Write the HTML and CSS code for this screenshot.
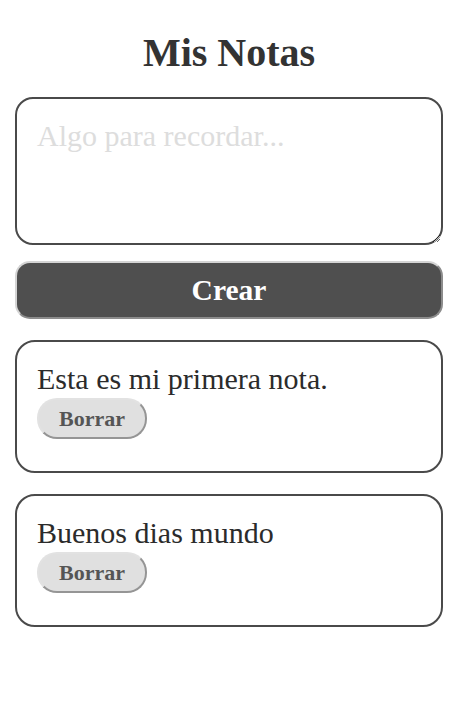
FILE: index.html
```html
<!DOCTYPE html>
<html lang="es">
<head>
<meta charset="utf-8">
<title>Mis Notas</title>
<link rel="stylesheet" href="styles.css">
</head>
<body>
<main class="app">
  <h1 class="title">Mis Notas</h1>
  <textarea class="note-input" placeholder="Algo para recordar..."></textarea>
  <button class="create-btn" type="button">Crear</button>
  <section class="notes">
    <article class="note">
      <p class="note-text">Esta es mi primera nota.</p>
      <button class="delete-btn" type="button">Borrar</button>
    </article>
    <article class="note">
      <p class="note-text">Buenos dias mundo</p>
      <button class="delete-btn" type="button">Borrar</button>
    </article>
  </section>
</main>
</body>
</html>
```
FILE: styles.css
```css
html, body {
  margin: 0;
  padding: 0;
  background: #ffffff;
}

body {
  font-family: "Liberation Serif", "Times New Roman", serif;
  color: #333333;
}

.app {
  width: 428px;
  margin: 0 0 0 15px;
  padding-top: 30px;
  display: flex;
  flex-direction: column;
}

.title {
  margin: 0 0 21px;
  font-size: 40px;
  line-height: 46px;
  font-weight: bold;
  text-align: center;
  color: #333333;
}

.note-input {
  display: block;
  box-sizing: border-box;
  width: 428px;
  height: 148px;
  margin: 0 0 16px;
  padding: 20px;
  border: 2px solid #4a4a4a;
  border-radius: 18px;
  font-family: "Liberation Serif", "Times New Roman", serif;
  font-size: 30px;
  color: #333333;
  background: #ffffff;
  outline: none;
}

.note-input::placeholder {
  color: #dddddd;
  opacity: 1;
}

.create-btn {
  box-sizing: border-box;
  width: 428px;
  height: 58px;
  margin: 0 0 21px;
  padding: 0;
  border: 2px solid;
  border-color: #d4d4d4 #8c8c8c #8c8c8c #d4d4d4;
  border-radius: 15px;
  background: #4f4f4f;
  color: #ffffff;
  font-family: "Liberation Serif", "Times New Roman", serif;
  font-size: 29.5px;
  font-weight: bold;
  line-height: 34px;
}

.notes {
  display: flex;
  flex-direction: column;
  gap: 21px;
}

.note {
  box-sizing: border-box;
  height: 133px;
  padding: 20px;
  border: 2px solid #4a4a4a;
  border-radius: 20px;
  display: flex;
  flex-direction: column;
  align-items: flex-start;
}

.note-text {
  margin: 0 0 2px;
  font-size: 30px;
  line-height: 34px;
  color: #2b2b2b;
}

.delete-btn {
  box-sizing: border-box;
  height: 41px;
  padding: 0 20px;
  border: 2px solid;
  border-color: #e2e2e2 #959595 #959595 #e2e2e2;
  border-radius: 20px;
  background: #e0e0e0;
  color: #555555;
  font-family: "Liberation Serif", "Times New Roman", serif;
  font-size: 22px;
  font-weight: bold;
  line-height: 25px;
}
```
